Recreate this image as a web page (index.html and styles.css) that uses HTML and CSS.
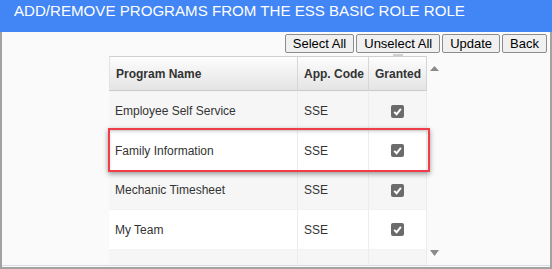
FILE: index.html
```html
<!DOCTYPE html>
<html lang="en">
<head>
<meta charset="utf-8">
<title>Add/Remove Programs</title>
<link rel="stylesheet" href="styles.css">
</head>
<body>
<div class="page">
  <header class="titlebar">ADD/REMOVE PROGRAMS FROM THE ESS BASIC ROLE ROLE</header>
  <div class="frame">
    <div class="toolbar">
      <button class="btn">Select All</button>
      <button class="btn">Unselect All</button>
      <button class="btn">Update</button>
      <button class="btn">Back</button>
      <span class="grip"></span>
    </div>
    <div class="table-area">
      <div class="grid-wrap">
        <div class="grid">
          <div class="th">Program Name</div>
          <div class="th">App. Code</div>
          <div class="th">Granted</div>

          <div class="td odd">Employee Self Service</div>
          <div class="td odd">SSE</div>
          <div class="td odd chk"><svg width="13" height="13" viewBox="0 0 13 13"><rect width="13" height="13" rx="2" fill="#6b6b6b"/><path d="M3.2 6.9 L5.6 9.3 L9.9 3.8" fill="none" stroke="#fff" stroke-width="2"/></svg></div>

          <div class="td">Family Information</div>
          <div class="td">SSE</div>
          <div class="td chk"><svg width="13" height="13" viewBox="0 0 13 13"><rect width="13" height="13" rx="2" fill="#6b6b6b"/><path d="M3.2 6.9 L5.6 9.3 L9.9 3.8" fill="none" stroke="#fff" stroke-width="2"/></svg></div>

          <div class="td odd">Mechanic Timesheet</div>
          <div class="td odd">SSE</div>
          <div class="td odd chk"><svg width="13" height="13" viewBox="0 0 13 13"><rect width="13" height="13" rx="2" fill="#6b6b6b"/><path d="M3.2 6.9 L5.6 9.3 L9.9 3.8" fill="none" stroke="#fff" stroke-width="2"/></svg></div>

          <div class="td">My Team</div>
          <div class="td">SSE</div>
          <div class="td chk"><svg width="13" height="13" viewBox="0 0 13 13"><rect width="13" height="13" rx="2" fill="#6b6b6b"/><path d="M3.2 6.9 L5.6 9.3 L9.9 3.8" fill="none" stroke="#fff" stroke-width="2"/></svg></div>

          <div class="td odd"></div>
          <div class="td odd"></div>
          <div class="td odd"></div>
        </div>
      </div>
      <div class="scroller">
        <svg class="arrow" width="9" height="5" viewBox="0 0 9 5"><path d="M0 5 L4.5 0 L9 5 Z" fill="#8a8a8a"/></svg>
        <svg class="arrow" width="9" height="6" viewBox="0 0 9 6"><path d="M0 0 L9 0 L4.5 6 Z" fill="#8a8a8a"/></svg>
      </div>
      <div class="highlight"></div>
    </div>
    <div class="bottom-line"></div>
  </div>
</div>
</body>
</html>
```

FILE: styles.css
```css
html, body {
  margin: 0;
  padding: 0;
}
body {
  width: 552px;
  height: 269px;
  overflow: hidden;
  font-family: "Liberation Sans", Arial, sans-serif;
  background: #fafafa;
}
.page {
  width: 552px;
  height: 269px;
  display: flex;
  flex-direction: column;
}
.titlebar {
  height: 32px;
  line-height: 22px;
  background: #4285f4;
  color: #ffffff;
  font-size: 15.1px;
  padding-left: 14px;
  box-sizing: border-box;
  white-space: nowrap;
}
.frame {
  flex: 1;
  border: 2px solid #a2a2a2;
  border-top: 0;
  background: #fafafa;
  display: flex;
  flex-direction: column;
}
.toolbar {
  position: relative;
  margin-top: 2px;
  height: 19px;
  display: flex;
  justify-content: flex-end;
  gap: 2px;
  padding-right: 3px;
}
.btn {
  height: 19px;
  margin: 0;
  padding: 0 7px;
  font-family: "Liberation Sans", Arial, sans-serif;
  font-size: 13px;
  line-height: 17px;
  color: #000;
  background: #f0f0f0;
  border: 1px solid #8c8c8c;
  border-radius: 2px;
  box-sizing: border-box;
}
.grip {
  position: absolute;
  left: 391px;
  top: 20px;
  width: 10px;
  height: 2px;
  background: #d0d0d0;
}
.table-area {
  position: relative;
  margin-top: 3px;
  margin-left: 107px;
  height: 209px;
  display: flex;
}
.grid-wrap {
  width: 318px;
  height: 209px;
  overflow: hidden;
}
.grid {
  display: grid;
  grid-template-columns: 189px 71px 58px;
  grid-template-rows: 35px 39px 40px 39px 40px 39px;
}
.th {
  display: flex;
  align-items: center;
  padding-left: 6px;
  font-size: 12px;
  font-weight: bold;
  color: #333;
  background: linear-gradient(#fdfdfd, #e4e4e4);
  border-top: 1px solid #d0d0d0;
  border-bottom: 1px solid #cccccc;
  border-right: 1px solid #d6d6d6;
  box-sizing: border-box;
  white-space: nowrap;
}
.th:first-child {
  border-left: 1px solid #e2e2e2;
}
.td {
  display: flex;
  align-items: center;
  padding-left: 6px;
  font-size: 12px;
  color: #333;
  background: #ffffff;
  border-right: 1px solid #ececec;
  border-top: 1px solid #f2f2f2;
  box-sizing: border-box;
  white-space: nowrap;
}
.td.odd {
  background: #f6f6f6;
}
.td.chk {
  justify-content: center;
  padding-left: 0;
}
.td svg {
  display: block;
}
.scroller {
  width: 14px;
  padding: 10px 0 9px 3px;
  box-sizing: border-box;
  display: flex;
  flex-direction: column;
  justify-content: space-between;
}
.arrow {
  display: block;
}
.highlight {
  position: absolute;
  left: -1px;
  top: 72px;
  width: 322px;
  height: 44px;
  border: 2px solid #ef3e47;
  box-sizing: border-box;
  box-shadow: 0 2px 5px rgba(0, 0, 0, 0.38), inset 0 2px 3px rgba(0, 0, 0, 0.14);
}
.bottom-line {
  height: 1px;
  background: #d8dde3;
}
```
